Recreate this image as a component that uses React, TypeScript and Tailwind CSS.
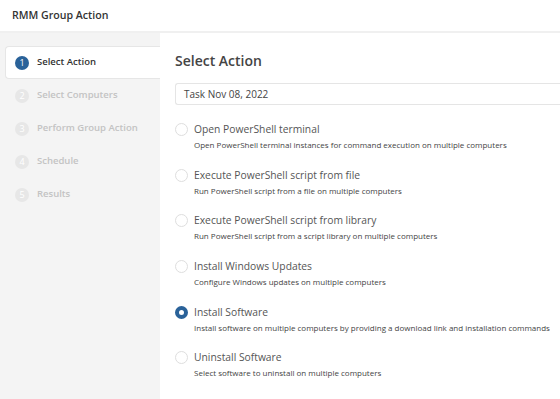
import React from "react";

const steps = [
  "Select Action",
  "Select Computers",
  "Perform Group Action",
  "Schedule",
  "Results",
];

const options = [
  { title: "Open PowerShell terminal", desc: "Open PowerShell terminal instances for command execution on multiple computers" },
  { title: "Execute PowerShell script from file", desc: "Run PowerShell script from a file on multiple computers" },
  { title: "Execute PowerShell script from library", desc: "Run PowerShell script from a script library on multiple computers" },
  { title: "Install Windows Updates", desc: "Configure Windows updates on multiple computers" },
  { title: "Install Software", desc: "Install software on multiple computers by providing a download link and installation commands", checked: true },
  { title: "Uninstall Software", desc: "Select software to uninstall on multiple computers" },
];

export default function App() {
  return (
    <div className="w-[560px] h-[399px] bg-white flex flex-col overflow-hidden text-[#444]" style={{ fontFamily: '"Open Sans", sans-serif' }}>
      <div className="h-[33px] shrink-0 flex items-center pl-3 border-b-2 border-[#f0f0f0]">
        <span className="text-[10.6px] font-semibold text-[#333]">RMM Group Action</span>
      </div>
      <div className="flex flex-1 min-h-0">
        <div className="w-[160px] shrink-0 bg-[#f4f4f4] pt-[13px] pl-[5px] flex flex-col">
          {steps.map((s, i) => {
            const active = i === 0;
            return (
              <div
                key={s}
                className={
                  active
                    ? "h-[33px] flex items-center pl-[9px] gap-[8px] bg-white border border-r-0 border-[#e6e6e6] rounded-l-[4px]"
                    : "h-[33px] flex items-center pl-[10px] gap-[8px]"
                }
              >
                <span
                  className={
                    active
                      ? "w-[14px] h-[14px] rounded-full bg-[#2a6299] text-white text-[9px] flex items-center justify-center"
                      : "w-[14px] h-[14px] rounded-full bg-[#e7e7e7] text-white text-[9px] flex items-center justify-center"
                  }
                >
                  {i + 1}
                </span>
                <span className={active ? "text-[9.5px] font-semibold text-[#333]" : "text-[9.5px] font-semibold text-[#c3c3c3]"}>{s}</span>
              </div>
            );
          })}
        </div>
        <div className="flex-1 pl-[15px] pt-[16px] min-w-0">
          <div className="text-[14px] font-semibold text-[#444] leading-[24px]">Select Action</div>
          <div className="mt-[10px] h-[22px] border border-[#e5e5e5] rounded-l-[3px] border-r-0 flex items-center pl-[8px] text-[10px] text-[#444] w-[400px]">
            Task Nov 08, 2022
          </div>
          <div className="mt-[16px] flex flex-col gap-[15.7px]">
            {options.map((o) => (
              <div key={o.title} className="flex gap-[6px]">
                <span
                  className={
                    o.checked
                      ? "mt-[2px] w-[13px] h-[13px] rounded-full border-[4px] border-[#2a6299] bg-white shrink-0"
                      : "mt-[2px] w-[13px] h-[13px] rounded-full border border-[#dedede] bg-white shrink-0"
                  }
                />
                <div className="flex flex-col">
                  <span className="text-[10.3px] leading-[16px] text-[#555] whitespace-nowrap">{o.title}</span>
                  <span className="text-[8px] leading-[12px] mt-[2px] text-[#444] whitespace-nowrap">{o.desc}</span>
                </div>
              </div>
            ))}
          </div>
        </div>
      </div>
    </div>
  );
}
